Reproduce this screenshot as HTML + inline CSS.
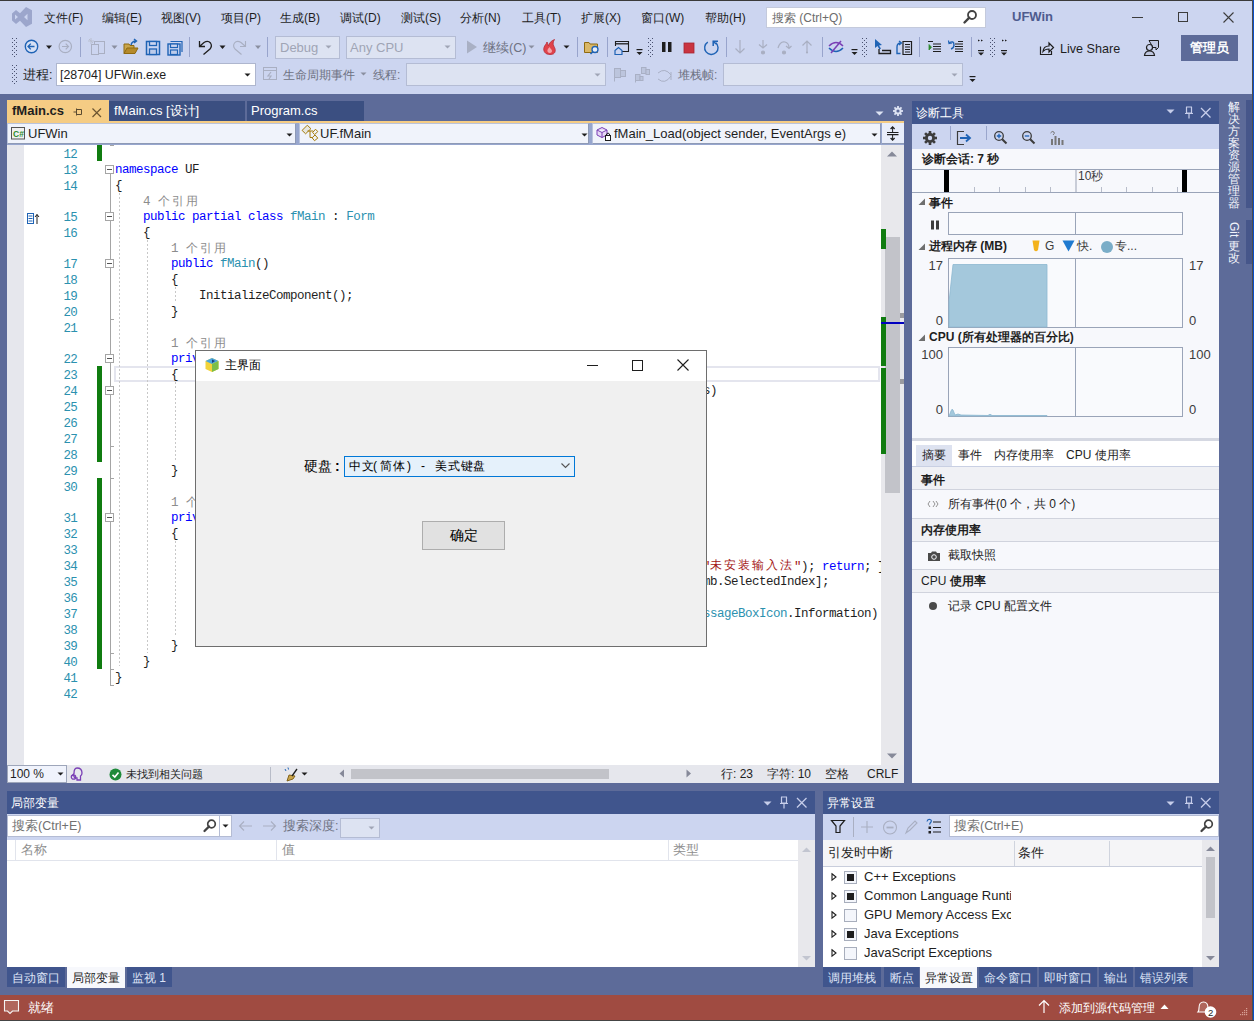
<!DOCTYPE html>
<html><head><meta charset="utf-8">
<style>
*{box-sizing:border-box}
html,body{margin:0;padding:0}
body{width:1254px;height:1021px;position:relative;overflow:hidden;background:#CCD5F0;font-family:"Liberation Sans",sans-serif;font-size:12px;color:#1E1E1E}
.a{position:absolute}
.t{position:absolute;white-space:nowrap;line-height:16px;height:16px}
.code{font-family:"Liberation Mono",monospace;font-size:12.5px;letter-spacing:-0.5px}
.cj{font-family:"Liberation Sans",sans-serif;font-size:13px;letter-spacing:1px}
.t.code{margin-top:1px}
.t.code.ln{margin-top:2px}
.kw{color:#0000FF}.ty{color:#2B91AF}.st{color:#A31515}
.ln{position:absolute;left:40px;width:37px;text-align:right;color:#2B91AF}
.cl{color:#8A8A8A;font-size:12px}
.cjk{font-family:"Liberation Sans",sans-serif;font-size:12px;letter-spacing:2px;position:relative;top:-1px}
svg{position:absolute;overflow:visible}
</style></head><body>
<!-- window borders -->
<div class="a" style="left:0;top:0;width:1254px;height:1px;background:#3A3A3A"></div>
<div class="a" style="left:1252px;top:0;width:1px;height:1021px;background:#4D4D4D"></div><div class="a" style="left:1253px;top:0;width:1px;height:1021px;background:#0B4FC8"></div>
<div class="a" style="left:0;top:1020px;width:1254px;height:1px;background:#444"></div>

<!-- main dark env area -->
<div class="a" style="left:0;top:94px;width:1252px;height:901px;background:#5D6B99"></div>

<!-- status bar -->
<div class="a" style="left:0;top:995px;width:1252px;height:25px;background:#A04B41"></div>

<!-- editor -->
<div class="a" style="left:7px;top:144px;width:897px;height:621px;background:#FFFFFF"></div>
<div class="a" style="left:7px;top:144px;width:17px;height:621px;background:#E6E7ED"></div>

<!-- diag panel -->
<div class="a" style="left:912px;top:101px;width:307px;height:682px;background:#F7F8FC"></div>

<!-- locals panel -->
<div class="a" style="left:7px;top:791px;width:808px;height:176px;background:#FFFFFF"></div>
<!-- exception panel -->
<div class="a" style="left:823px;top:791px;width:396px;height:176px;background:#FFFFFF"></div>


<!-- ===== TITLE / MENU BAR ===== -->
<svg style="left:0;top:0" width="40" height="34"><path d="M12,13.5 L16,10 L20,13.2 L26,7 L32,10.2 L32,23.8 L26,27 L20,20.8 L16,24 L12,20.5 Z M15,14.5 L15,19.5 L18,17 Z M27.5,13.8 L24,17 L27.5,20.2 Z" fill="#9CA6CC" fill-rule="evenodd"/></svg>
<div class="t" style="left:44px;top:10px">文件(F)</div>
<div class="t" style="left:102px;top:10px">编辑(E)</div>
<div class="t" style="left:161px;top:10px">视图(V)</div>
<div class="t" style="left:221px;top:10px">项目(P)</div>
<div class="t" style="left:280px;top:10px">生成(B)</div>
<div class="t" style="left:340px;top:10px">调试(D)</div>
<div class="t" style="left:401px;top:10px">测试(S)</div>
<div class="t" style="left:460px;top:10px">分析(N)</div>
<div class="t" style="left:522px;top:10px">工具(T)</div>
<div class="t" style="left:581px;top:10px">扩展(X)</div>
<div class="t" style="left:641px;top:10px">窗口(W)</div>
<div class="t" style="left:705px;top:10px">帮助(H)</div>
<div class="a" style="left:766px;top:7px;width:220px;height:21px;background:#FFFFFF;border:1px solid #C4CADC"></div>
<div class="t" style="left:772px;top:10px;color:#6D6D6D">搜索 (Ctrl+Q)</div>
<svg style="left:962px;top:9px" width="16" height="16"><circle cx="10" cy="6" r="4" fill="none" stroke="#424242" stroke-width="1.8"/><path d="M7.3,8.7 L2.5,13.5" stroke="#424242" stroke-width="2.4" stroke-linecap="round"/></svg>
<div class="t" style="left:1012px;top:9px;font-weight:bold;font-size:13px;color:#4E5B8E">UFWin</div>
<div class="a" style="left:1132px;top:17px;width:11px;height:1px;background:#3C3C3C"></div>
<div class="a" style="left:1178px;top:12px;width:10px;height:10px;border:1px solid #3C3C3C"></div>
<svg style="left:1223px;top:12px" width="12" height="12"><path d="M0.5,0.5 L10.5,10.5 M10.5,0.5 L0.5,10.5" stroke="#3C3C3C" stroke-width="1.1"/></svg>

<!-- ===== TOOLBAR ROW 1 ===== -->
<svg style="left:11px;top:37px" width="8" height="21"><g fill="#4A5270"><rect x="1" y="1" width="1" height="1"/><rect x="5" y="1" width="1" height="1"/><rect x="3" y="3" width="1" height="1"/><rect x="1" y="5" width="1" height="1"/><rect x="5" y="5" width="1" height="1"/><rect x="3" y="7" width="1" height="1"/><rect x="1" y="9" width="1" height="1"/><rect x="5" y="9" width="1" height="1"/><rect x="3" y="11" width="1" height="1"/><rect x="1" y="13" width="1" height="1"/><rect x="5" y="13" width="1" height="1"/><rect x="3" y="15" width="1" height="1"/><rect x="1" y="17" width="1" height="1"/><rect x="5" y="17" width="1" height="1"/><rect x="3" y="19" width="1" height="1"/></g></svg>
<svg style="left:0;top:34px" width="270" height="28">
 <circle cx="31.5" cy="12.5" r="6.2" fill="#D6E0F5" stroke="#1F63B5" stroke-width="1.4"/>
 <path d="M34.5,12.5 H28 M30.8,9.6 L28,12.5 L30.8,15.4" fill="none" stroke="#1F63B5" stroke-width="1.3"/>
 <path d="M46,11.5 H52 L49,15 Z" fill="#1E1E1E"/>
 <circle cx="65.3" cy="12.5" r="6.2" fill="none" stroke="#A9AFC2" stroke-width="1.2"/>
 <path d="M62,12.5 H68.5 M65.7,9.6 L68.5,12.5 L65.7,15.4" fill="none" stroke="#A9AFC2" stroke-width="1.2"/>
 <rect x="80" y="3" width="1" height="20" fill="#98A4CC"/>
 <rect x="94.5" y="7.5" width="10" height="12" fill="none" stroke="#A9AFC2"/>
 <rect x="91.5" y="10.5" width="7" height="10" fill="#CCD5F0" stroke="#A9AFC2"/>
 <path d="M89,5 L93,9 M91,4 V10 M88,7 H94" stroke="#B9BFD0" stroke-width="1"/>
 <path d="M111.5,11.5 H117.5 L114.5,15 Z" fill="#8A8FA0"/>
 <path d="M124,10 H129 L130,11.5 H134 V19.5 H124 Z" fill="#C9A54C" stroke="#8F6A10" stroke-width="1"/>
 <path d="M124,19.5 L127,14 H138 L135,19.5 Z" fill="#B58A2A" stroke="#8F6A10" stroke-width="1"/>
 <path d="M131,11 Q132,7 136,7 M134,5 L136.5,7 L134,9" fill="none" stroke="#1F63B5" stroke-width="1.4"/>
 <rect x="146.5" y="7.5" width="13" height="13" fill="#C8D4F2" stroke="#1F63B5" stroke-width="1.5"/>
 <rect x="149.5" y="7.5" width="7" height="4" fill="#CCD5F0" stroke="#1F63B5" stroke-width="1.3"/>
 <rect x="149.5" y="15" width="7" height="5.5" fill="#BCCBEA" stroke="#1F63B5" stroke-width="1.3"/>
 <path d="M170.5,7.5 H182 V18" fill="none" stroke="#1F63B5" stroke-width="1.2"/>
 <rect x="168" y="10" width="12" height="11" fill="#C8D4F2" stroke="#1F63B5" stroke-width="1.4"/>
 <rect x="170.5" y="10" width="7" height="3.5" fill="#CCD5F0" stroke="#1F63B5" stroke-width="1.2"/>
 <rect x="170.5" y="16" width="7" height="4.5" fill="#BCCBEA" stroke="#1F63B5" stroke-width="1.2"/>
 <rect x="189" y="3" width="1" height="20" fill="#98A4CC"/>
 <path d="M199.5,7 V12.5 H205 M200,12 L204,8.5 Q208,6 210.5,9 Q212.5,12 210,15 L203.5,20.5" fill="none" stroke="#1E1E1E" stroke-width="1.3"/>
 <path d="M219.5,11.5 H225.5 L222.5,15 Z" fill="#1E1E1E"/>
 <path d="M245.5,7 V12.5 H240 M245,12 L241,8.5 Q237,6 234.5,9 Q232.5,12 235,15 L241.5,20.5" fill="none" stroke="#A9AFC2" stroke-width="1.1"/>
 <path d="M255,11.5 H261 L258,15 Z" fill="#8A8FA0"/>
 <rect x="267" y="3" width="1" height="20" fill="#98A4CC"/>
</svg>
<div class="a" style="left:275px;top:36px;width:65px;height:23px;background:#DDE3F2;border:1px solid #B4BCD4"></div>
<div class="t" style="left:280px;top:40px;color:#A0A5B5;font-size:13px">Debug</div>
<svg style="left:325px;top:45px" width="8" height="5"><path d="M0.5,0.5 H6.5 L3.5,3.5 Z" fill="#A0A5B5"/></svg>
<div class="a" style="left:346px;top:36px;width:110px;height:23px;background:#DDE3F2;border:1px solid #B4BCD4"></div>
<div class="t" style="left:350px;top:40px;color:#A0A5B5;font-size:13px">Any CPU</div>
<svg style="left:444px;top:45px" width="8" height="5"><path d="M0.5,0.5 H6.5 L3.5,3.5 Z" fill="#A0A5B5"/></svg>
<svg style="left:466px;top:40px" width="12" height="14"><path d="M1,0.5 L11,7 L1,13.5 Z" fill="#A9B0C4"/></svg>
<div class="t" style="left:483px;top:40px;color:#6E7282;font-size:12.5px">继续(C)</div>
<svg style="left:528px;top:45px" width="8" height="5"><path d="M0.5,0.5 H6.5 L3.5,3.5 Z" fill="#8A8FA0"/></svg>
<svg style="left:541px;top:38px" width="18" height="18"><path d="M9,16.5 C4,16.5 2,13 3,9.5 C3.8,7 5.5,6 6,4 C7,6 7,7 7.5,8 C8,5 10,3 13.5,1.5 C12,4 11.5,6 13,8.5 C14.5,11 15,14 12.5,15.8 C11.5,16.3 10.5,16.5 9,16.5 Z" fill="#E0434B" stroke="#B52A36" stroke-width="0.8"/><path d="M9,15 C7,15 6,13.5 6.5,12 C7,10.5 8,10 8.5,9 C9.5,11 11,11.5 11,13 C11,14.3 10,15 9,15 Z" fill="#F5A3A8"/></svg>
<svg style="left:563px;top:45px" width="8" height="5"><path d="M0.5,0.5 H6.5 L3.5,3.5 Z" fill="#1E1E1E"/></svg>
<div class="a" style="left:577px;top:37px;width:1px;height:20px;background:#98A4CC"></div>
<svg style="left:583px;top:38px" width="18" height="18"><path d="M1.5,4.5 H6 L7,6 H14.5 V14.5 H1.5 Z" fill="#D9B767" stroke="#8F6A10"/><circle cx="12" cy="11.5" r="3" fill="#E6EEFA" stroke="#1F63B5" stroke-width="1.3"/><path d="M10,13.5 L7.5,16" stroke="#1F63B5" stroke-width="1.6"/></svg>
<div class="a" style="left:607px;top:37px;width:1px;height:20px;background:#98A4CC"></div>
<svg style="left:612px;top:38px" width="20" height="18"><path d="M7,13.5 H16.5 V3.5 H3.5 V8" fill="none" stroke="#1E1E1E" stroke-width="1.1"/><path d="M3.5,5.8 H16.5" stroke="#1E1E1E" stroke-width="1.3"/><path d="M3,12.5 L6.5,9.5 L10,12.5 V16.5 H3 Z" fill="#CCD5F0" stroke="#1F63B5" stroke-width="1.2"/></svg>
<svg style="left:636px;top:49px" width="8" height="8"><rect x="0.5" y="0" width="6" height="1.2" fill="#1E1E1E"/><path d="M0.5,3 H6.5 L3.5,6 Z" fill="#1E1E1E"/></svg>
<svg style="left:648px;top:37px" width="6" height="21"><g fill="#4A5270"><rect x="0" y="1" width="1" height="1"/><rect x="4" y="1" width="1" height="1"/><rect x="2" y="3" width="1" height="1"/><rect x="0" y="5" width="1" height="1"/><rect x="4" y="5" width="1" height="1"/><rect x="2" y="7" width="1" height="1"/><rect x="0" y="9" width="1" height="1"/><rect x="4" y="9" width="1" height="1"/><rect x="2" y="11" width="1" height="1"/><rect x="0" y="13" width="1" height="1"/><rect x="4" y="13" width="1" height="1"/><rect x="2" y="15" width="1" height="1"/><rect x="0" y="17" width="1" height="1"/><rect x="4" y="17" width="1" height="1"/><rect x="2" y="19" width="1" height="1"/></g></svg>
<svg style="left:660px;top:40px" width="14" height="14"><rect x="2" y="2" width="3.5" height="10" fill="#1E1E1E"/><rect x="8" y="2" width="3.5" height="10" fill="#1E1E1E"/></svg>
<svg style="left:682px;top:40px" width="14" height="14"><rect x="2" y="3" width="10" height="10" fill="#C93440" stroke="#A82531" stroke-width="0.8"/></svg>
<svg style="left:702px;top:38px" width="18" height="18"><path d="M5.8,4.1 A6.7,6.7 0 1 0 13.6,4.6" fill="none" stroke="#1F63B5" stroke-width="1.4"/><path d="M16,3.2 H11.2 V8" fill="none" stroke="#1F63B5" stroke-width="1.5"/><path d="M11.2,3.2 L14,6" stroke="#1F63B5" stroke-width="1.3"/></svg>
<div class="a" style="left:726px;top:37px;width:1px;height:20px;background:#98A4CC"></div>
<svg style="left:732px;top:38px" width="90" height="18" fill="none" stroke="#A9AFC2" stroke-width="1.2">
 <path d="M8,2 V15 M3.5,10.5 L8,15 L12.5,10.5"/>
 <path d="M31,2 V10 M27,6.5 L31,10 L35,6.5"/><circle cx="31" cy="14.5" r="1.5" fill="#A9AFC2"/>
 <path d="M46,10 Q48,3 53,4 Q57,5 57,10 M54,8 L57,10.5 L59.5,8"/><circle cx="52" cy="14.5" r="1.5" fill="#A9AFC2"/>
 <path d="M75,15 V3 M70.5,7.5 L75,3 L79.5,7.5"/><circle cx="75" cy="14.5" r="0.5"/>
</svg>
<div class="a" style="left:822px;top:37px;width:1px;height:20px;background:#98A4CC"></div>
<svg style="left:827px;top:38px" width="18" height="18" fill="none" stroke-width="1.5"><path d="M2,8 Q9,1 16,8" stroke="#7A3FB5"/><path d="M2,10 Q9,17 16,10" stroke="#1F63B5"/><path d="M4,15 L14,3" stroke="#7A3FB5"/></svg>
<svg style="left:851px;top:49px" width="8" height="8"><rect x="0.5" y="0" width="6" height="1.2" fill="#1E1E1E"/><path d="M0.5,3 H6.5 L3.5,6 Z" fill="#1E1E1E"/></svg>
<svg style="left:862px;top:37px" width="6" height="21"><g fill="#4A5270"><rect x="0" y="1" width="1" height="1"/><rect x="4" y="1" width="1" height="1"/><rect x="2" y="3" width="1" height="1"/><rect x="0" y="5" width="1" height="1"/><rect x="4" y="5" width="1" height="1"/><rect x="2" y="7" width="1" height="1"/><rect x="0" y="9" width="1" height="1"/><rect x="4" y="9" width="1" height="1"/><rect x="2" y="11" width="1" height="1"/><rect x="0" y="13" width="1" height="1"/><rect x="4" y="13" width="1" height="1"/><rect x="2" y="15" width="1" height="1"/><rect x="0" y="17" width="1" height="1"/><rect x="4" y="17" width="1" height="1"/><rect x="2" y="19" width="1" height="1"/></g></svg>
<svg style="left:873px;top:38px" width="20" height="18"><path d="M2,1 L2,10 L4.5,8 L6.5,11.5 L8,10.5 L6,7.5 L9,7 Z" fill="#1F63B5"/><path d="M6,11 V15.5 H17.5 V12.5 H9" fill="none" stroke="#1E1E1E" stroke-width="1.3"/></svg>
<svg style="left:895px;top:38px" width="20" height="18" fill="none" stroke="#1E1E1E" stroke-width="1.2"><path d="M8,3.5 H16.5 V16.5 H8 Z M10,6.5 H15 M10,9 H15 M10,11.5 H15 M10,14 H15"/><path d="M6,5 Q2,5 2,9 V15.5 H5.5" stroke="#1F63B5" stroke-width="1.4"/><path d="M4,3 L6.5,5 L4,7" stroke="#1F63B5" stroke-width="1.3"/></svg>
<div class="a" style="left:919px;top:37px;width:1px;height:20px;background:#98A4CC"></div>
<svg style="left:926px;top:38px" width="18" height="18" fill="none" stroke-width="1.2"><path d="M2,3.5 H7 M7,6 H15 M7,8.5 H15 M7,11 H15 M7,13.5 H15" stroke="#1E1E1E"/><path d="M3,6.5 V12 L5.5,9.2 Z" fill="#2E8B2E" stroke="#2E8B2E" stroke-width="0.8"/></svg>
<svg style="left:947px;top:38px" width="18" height="18" fill="none" stroke-width="1.2"><path d="M8,6 H16 M8,8.5 H16 M8,11 H16 M8,13.5 H16 M11,3.5 H16" stroke="#1E1E1E"/><path d="M2,5 Q7,2 7,7 Q7,10 4,11" stroke="#1F63B5" stroke-width="1.4"/><path d="M1.5,2.5 L2,5.5 L5,5" stroke="#1F63B5"/></svg>
<div class="a" style="left:971px;top:37px;width:1px;height:20px;background:#98A4CC"></div>
<svg style="left:976px;top:38px" width="40" height="19"><g fill="#1E1E1E"><path d="M2,1.5 L4,2.5 L2,3.5 Z M5,1.5 L7,2.5 L5,3.5 Z"/><rect x="2" y="12" width="6" height="1.2"/><path d="M2,14.5 H8 L5,17.5 Z"/><path d="M26,1.5 L28,2.5 L26,3.5 Z M29,1.5 L31,2.5 L29,3.5 Z"/><rect x="25" y="12" width="6" height="1.2"/><path d="M25,14.5 H31 L28,17.5 Z"/></g><g fill="#4A5270"><rect x="14" y="0" width="1" height="1"/><rect x="18" y="0" width="1" height="1"/><rect x="16" y="2" width="1" height="1"/><rect x="14" y="4" width="1" height="1"/><rect x="18" y="4" width="1" height="1"/><rect x="16" y="6" width="1" height="1"/><rect x="14" y="8" width="1" height="1"/><rect x="18" y="8" width="1" height="1"/><rect x="16" y="10" width="1" height="1"/><rect x="14" y="12" width="1" height="1"/><rect x="18" y="12" width="1" height="1"/><rect x="16" y="14" width="1" height="1"/><rect x="14" y="16" width="1" height="1"/><rect x="18" y="16" width="1" height="1"/><rect x="16" y="18" width="1" height="1"/></g></svg>
<svg style="left:1039px;top:40px" width="16" height="16" fill="none" stroke="#1E1E1E" stroke-width="1.2"><path d="M1.5,6.5 V14.5 H12.5 V11"/><path d="M4,11.5 Q4.5,6 10,6 V3 L14.5,7.5 L10,12 V9 Q6,9 4,11.5 Z"/></svg>
<div class="t" style="left:1060px;top:41px;font-size:12.6px;color:#1E1E1E">Live Share</div>
<svg style="left:1143px;top:39px" width="18" height="18" stroke="#1E1E1E" stroke-width="1.2"><path d="M6,1.5 H15.5 V8.5 L13,11 V8.5 H10 Z" fill="#BFC7E0" stroke-width="1"/><circle cx="6.5" cy="8.5" r="3" fill="#CCD5F0"/><path d="M1.5,16.5 Q2,12 6.5,12 Q11,12 11.5,16.5 Z" fill="#BFC7E0"/></svg>
<div class="a" style="left:1181px;top:35px;width:57px;height:26px;background:#5D6B99"></div>
<div class="t" style="left:1181px;top:40px;width:57px;text-align:center;color:#FFFFFF;font-weight:bold;font-size:12.5px">管理员</div>

<!-- ===== TOOLBAR ROW 2 ===== -->
<svg style="left:11px;top:64px" width="8" height="21"><g fill="#4A5270"><rect x="1" y="1" width="1" height="1"/><rect x="5" y="1" width="1" height="1"/><rect x="3" y="3" width="1" height="1"/><rect x="1" y="5" width="1" height="1"/><rect x="5" y="5" width="1" height="1"/><rect x="3" y="7" width="1" height="1"/><rect x="1" y="9" width="1" height="1"/><rect x="5" y="9" width="1" height="1"/><rect x="3" y="11" width="1" height="1"/><rect x="1" y="13" width="1" height="1"/><rect x="5" y="13" width="1" height="1"/><rect x="3" y="15" width="1" height="1"/><rect x="1" y="17" width="1" height="1"/><rect x="5" y="17" width="1" height="1"/><rect x="3" y="19" width="1" height="1"/></g></svg>
<div class="t" style="left:23px;top:67px;font-size:12.5px">进程:</div>
<div class="a" style="left:56px;top:63px;width:200px;height:23px;background:#FFFFFF;border:1px solid #AEB6CE"></div>
<div class="t" style="left:60px;top:67px;font-size:12.4px">[28704] UFWin.exe</div>
<svg style="left:244px;top:73px" width="8" height="5"><path d="M0.5,0.5 H6.5 L3.5,3.5 Z" fill="#1E1E1E"/></svg>
<svg style="left:262px;top:66px" width="16" height="16" fill="none" stroke="#A9AFC2" stroke-width="1"><rect x="1.5" y="1.5" width="13" height="12"/><path d="M1.5,4.5 H14.5"/><path d="M9,6 L6,10 H9 L7,13" stroke-width="1.2"/></svg>
<div class="t" style="left:283px;top:67px;font-size:12px;color:#6E7282">生命周期事件</div>
<svg style="left:360px;top:72px" width="8" height="5"><path d="M0.5,0.5 H6.5 L3.5,3.5 Z" fill="#8A8FA0"/></svg>
<div class="t" style="left:373px;top:67px;font-size:12px;color:#6E7282">线程:</div>
<div class="a" style="left:406px;top:63px;width:200px;height:23px;background:#DDE3F2;border:1px solid #B4BCD4"></div>
<svg style="left:594px;top:73px" width="8" height="5"><path d="M0.5,0.5 H6.5 L3.5,3.5 Z" fill="#A0A5B5"/></svg>
<svg style="left:612px;top:66px" width="64" height="17" stroke="#A9B0C5" stroke-width="1"><path d="M2.5,2 V15.5" fill="none"/><rect x="2.5" y="2.5" width="6" height="9" fill="#BCC5DD"/><rect x="8.5" y="4.5" width="5" height="6" fill="#BCC5DD"/><path d="M23.5,8 V16.5" fill="none"/><rect x="23.5" y="8.5" width="4.5" height="6" fill="#BCC5DD"/><rect x="28" y="10.5" width="3" height="4" fill="#BCC5DD"/><rect x="29.5" y="1.5" width="4.5" height="6" fill="#BCC5DD"/><rect x="34" y="3.5" width="3.5" height="5" fill="#BCC5DD"/><path d="M46,7 Q53,1 59,9 M46,13 Q53,19 59,10 M59,6 V14" fill="none"/></svg>
<div class="t" style="left:678px;top:67px;font-size:12px;color:#6E7282">堆栈帧:</div>
<div class="a" style="left:723px;top:63px;width:240px;height:23px;background:#DDE3F2;border:1px solid #B4BCD4"></div>
<svg style="left:951px;top:73px" width="8" height="5"><path d="M0.5,0.5 H6.5 L3.5,3.5 Z" fill="#A0A5B5"/></svg>
<svg style="left:969px;top:76px" width="8" height="8"><rect x="0.5" y="0" width="6" height="1.2" fill="#1E1E1E"/><path d="M0.5,3 H6.5 L3.5,6 Z" fill="#1E1E1E"/></svg>

<!-- ===== EDITOR ===== -->
<div class="a" style="left:7px;top:144px;width:874px;height:621px;overflow:hidden">
<div class="a" style="left:107px;top:222px;width:766px;height:16px;border:2px solid #E4E5EE"></div>
<div class="a" style="left:90px;top:1px;width:5px;height:16px;background:#107C10"></div>
<div class="a" style="left:90px;top:222px;width:5px;height:96px;background:#107C10"></div>
<div class="a" style="left:90px;top:334px;width:5px;height:191px;background:#107C10"></div>
<div class="a" style="left:103px;top:26px;width:1px;height:516px;background:#A5A5A5"></div><div class="a" style="left:103px;top:1px;width:4px;height:1px;background:#A5A5A5"></div>
<div class="a" style="left:103px;top:1px;width:4px;height:1px;background:#A5A5A5"></div>
<div class="a" style="left:103px;top:175px;width:4px;height:1px;background:#A5A5A5"></div>
<div class="a" style="left:103px;top:302px;width:4px;height:1px;background:#A5A5A5"></div>
<div class="a" style="left:103px;top:334px;width:4px;height:1px;background:#A5A5A5"></div>
<div class="a" style="left:103px;top:509px;width:4px;height:1px;background:#A5A5A5"></div>
<div class="a" style="left:103px;top:525px;width:4px;height:1px;background:#A5A5A5"></div>
<div class="a" style="left:103px;top:541px;width:4px;height:1px;background:#A5A5A5"></div>
<div class="a" style="left:98px;top:21px;width:9px;height:9px;border:1px solid #A5A5A5;background:#fff"></div><div class="a" style="left:100px;top:25px;width:5px;height:1px;background:#555"></div>
<div class="a" style="left:98px;top:68px;width:9px;height:9px;border:1px solid #A5A5A5;background:#fff"></div><div class="a" style="left:100px;top:72px;width:5px;height:1px;background:#555"></div>
<div class="a" style="left:98px;top:115px;width:9px;height:9px;border:1px solid #A5A5A5;background:#fff"></div><div class="a" style="left:100px;top:119px;width:5px;height:1px;background:#555"></div>
<div class="a" style="left:98px;top:210px;width:9px;height:9px;border:1px solid #A5A5A5;background:#fff"></div><div class="a" style="left:100px;top:214px;width:5px;height:1px;background:#555"></div>
<div class="a" style="left:98px;top:242px;width:9px;height:9px;border:1px solid #A5A5A5;background:#fff"></div><div class="a" style="left:100px;top:246px;width:5px;height:1px;background:#555"></div>
<div class="a" style="left:98px;top:369px;width:9px;height:9px;border:1px solid #A5A5A5;background:#fff"></div><div class="a" style="left:100px;top:373px;width:5px;height:1px;background:#555"></div>
<div class="a" style="left:112px;top:49px;width:1px;height:473px;background:repeating-linear-gradient(to bottom,#C8C8C8 0 2px,transparent 2px 4px)"></div>
<div class="a" style="left:140px;top:96px;width:1px;height:413px;background:repeating-linear-gradient(to bottom,#C8C8C8 0 2px,transparent 2px 4px)"></div>
<div class="a" style="left:168px;top:143px;width:1px;height:16px;background:repeating-linear-gradient(to bottom,#C8C8C8 0 2px,transparent 2px 4px)"></div>
<div class="a" style="left:168px;top:238px;width:1px;height:80px;background:repeating-linear-gradient(to bottom,#C8C8C8 0 2px,transparent 2px 4px)"></div>
<div class="a" style="left:168px;top:397px;width:1px;height:96px;background:repeating-linear-gradient(to bottom,#C8C8C8 0 2px,transparent 2px 4px)"></div>
<div class="a" style="left:196px;top:254px;width:1px;height:48px;background:repeating-linear-gradient(to bottom,#C8C8C8 0 2px,transparent 2px 4px)"></div>
<div class="t code ln" style="left:33px;top:1px;letter-spacing:-0.8px">12</div>
<div class="t code ln" style="left:33px;top:17px;letter-spacing:-0.8px">13</div>
<div class="t code ln" style="left:33px;top:33px;letter-spacing:-0.8px">14</div>
<div class="t code ln" style="left:33px;top:64px;letter-spacing:-0.8px">15</div>
<div class="t code ln" style="left:33px;top:80px;letter-spacing:-0.8px">16</div>
<div class="t code ln" style="left:33px;top:111px;letter-spacing:-0.8px">17</div>
<div class="t code ln" style="left:33px;top:127px;letter-spacing:-0.8px">18</div>
<div class="t code ln" style="left:33px;top:143px;letter-spacing:-0.8px">19</div>
<div class="t code ln" style="left:33px;top:159px;letter-spacing:-0.8px">20</div>
<div class="t code ln" style="left:33px;top:175px;letter-spacing:-0.8px">21</div>
<div class="t code ln" style="left:33px;top:206px;letter-spacing:-0.8px">22</div>
<div class="t code ln" style="left:33px;top:222px;letter-spacing:-0.8px">23</div>
<div class="t code ln" style="left:33px;top:238px;letter-spacing:-0.8px">24</div>
<div class="t code ln" style="left:33px;top:254px;letter-spacing:-0.8px">25</div>
<div class="t code ln" style="left:33px;top:270px;letter-spacing:-0.8px">26</div>
<div class="t code ln" style="left:33px;top:286px;letter-spacing:-0.8px">27</div>
<div class="t code ln" style="left:33px;top:302px;letter-spacing:-0.8px">28</div>
<div class="t code ln" style="left:33px;top:318px;letter-spacing:-0.8px">29</div>
<div class="t code ln" style="left:33px;top:334px;letter-spacing:-0.8px">30</div>
<div class="t code ln" style="left:33px;top:365px;letter-spacing:-0.8px">31</div>
<div class="t code ln" style="left:33px;top:381px;letter-spacing:-0.8px">32</div>
<div class="t code ln" style="left:33px;top:397px;letter-spacing:-0.8px">33</div>
<div class="t code ln" style="left:33px;top:413px;letter-spacing:-0.8px">34</div>
<div class="t code ln" style="left:33px;top:429px;letter-spacing:-0.8px">35</div>
<div class="t code ln" style="left:33px;top:445px;letter-spacing:-0.8px">36</div>
<div class="t code ln" style="left:33px;top:461px;letter-spacing:-0.8px">37</div>
<div class="t code ln" style="left:33px;top:477px;letter-spacing:-0.8px">38</div>
<div class="t code ln" style="left:33px;top:493px;letter-spacing:-0.8px">39</div>
<div class="t code ln" style="left:33px;top:509px;letter-spacing:-0.8px">40</div>
<div class="t code ln" style="left:33px;top:525px;letter-spacing:-0.8px">41</div>
<div class="t code ln" style="left:33px;top:541px;letter-spacing:-0.8px">42</div>
<div class="t cl" style="left:136px;top:49px;height:15px;line-height:15px"><span class="code" style="font-size:12.5px;letter-spacing:-0.5px;color:#8C8C8C;position:relative;top:1px">4</span><span style="margin-left:8px;letter-spacing:2px;color:#8C8C8C;position:relative;top:1px">个引用</span></div>
<div class="t cl" style="left:164px;top:96px;height:15px;line-height:15px"><span class="code" style="font-size:12.5px;letter-spacing:-0.5px;color:#8C8C8C;position:relative;top:1px">1</span><span style="margin-left:8px;letter-spacing:2px;color:#8C8C8C;position:relative;top:1px">个引用</span></div>
<div class="t cl" style="left:164px;top:191px;height:15px;line-height:15px"><span class="code" style="font-size:12.5px;letter-spacing:-0.5px;color:#8C8C8C;position:relative;top:1px">1</span><span style="margin-left:8px;letter-spacing:2px;color:#8C8C8C;position:relative;top:1px">个引用</span></div>
<div class="t cl" style="left:164px;top:350px;height:15px;line-height:15px"><span class="code" style="font-size:12.5px;letter-spacing:-0.5px;color:#8C8C8C;position:relative;top:1px">1</span><span style="margin-left:8px;letter-spacing:2px;color:#8C8C8C;position:relative;top:1px">个引用</span></div>
<div class="t code" style="left:108px;top:17px"><span class="kw">namespace</span> UF</div>
<div class="t code" style="left:108px;top:33px">{</div>
<div class="t code" style="left:136px;top:64px"><span class="kw">public</span> <span class="kw">partial</span> <span class="kw">class</span> <span class="ty">fMain</span> : <span class="ty">Form</span></div>
<div class="t code" style="left:136px;top:80px">{</div>
<div class="t code" style="left:164px;top:111px"><span class="kw">public</span> <span class="ty">fMain</span>()</div>
<div class="t code" style="left:164px;top:127px">{</div>
<div class="t code" style="left:192px;top:143px">InitializeComponent();</div>
<div class="t code" style="left:164px;top:159px">}</div>
<div class="t code" style="left:164px;top:206px"><span class="kw">private</span> <span class="kw">void</span> fMain_Load(<span class="kw">object</span> sender, <span class="ty">EventArgs</span> e)</div>
<div class="t code" style="left:164px;top:222px">{</div>
<div class="t code" style="left:696px;top:238px">s)</div>
<div class="t code" style="left:164px;top:318px">}</div>
<div class="t code" style="left:164px;top:365px"><span class="kw">private</span> <span class="kw">void</span> btnOK_Click(<span class="kw">object</span> sender, <span class="ty">EventArgs</span> e)</div>
<div class="t code" style="left:164px;top:381px">{</div>
<div class="t code" style="left:696px;top:413px"><span class="st">"<span class="cjk">未安装输入法</span>"</span>); <span class="kw">return</span>; }</div>
<div class="t code" style="left:696px;top:429px">mb.SelectedIndex];</div>
<div class="t code" style="left:696px;top:461px"><span class="ty">ssageBoxIcon</span>.Information)</div>
<div class="t code" style="left:164px;top:493px">}</div>
<div class="t code" style="left:136px;top:509px">}</div>
<div class="t code" style="left:108px;top:525px">}</div>
<svg style="left:20px;top:69px" width="14" height="12"><rect x="0.5" y="0.5" width="6" height="10" fill="#fff" stroke="#1F63B5"/><path d="M1.5,3 H5.5 M1.5,5.5 H5.5 M1.5,8 H5.5" stroke="#1F63B5"/><path d="M10,11 V1.5 M8,4 L10,1.5 L12,4" fill="none" stroke="#1E1E1E" stroke-width="1"/></svg>
</div>
<div class="a" style="left:881px;top:144px;width:23px;height:621px;background:#E8E8EC"></div>
<svg style="left:886px;top:150px" width="12" height="8"><path d="M1,6.5 L6,1.5 L11,6.5 Z" fill="#868999"/></svg>
<svg style="left:886px;top:752px" width="12" height="8"><path d="M1,1.5 L6,6.5 L11,1.5 Z" fill="#868999"/></svg>
<div class="a" style="left:885px;top:237px;width:15px;height:256px;background:#C2C3C9"></div>
<div class="a" style="left:881px;top:229px;width:5px;height:20px;background:#107C10"></div>
<div class="a" style="left:881px;top:317px;width:5px;height:49px;background:#107C10"></div>
<div class="a" style="left:881px;top:368px;width:5px;height:86px;background:#107C10"></div>
<div class="a" style="left:881px;top:322px;width:23px;height:2px;background:#0000C0"></div>
<div class="a" style="left:900px;top:313px;width:4px;height:5px;background:#9A9AA0"></div>
<div class="a" style="left:900px;top:379px;width:4px;height:5px;background:#9A9AA0"></div>

<div class="a" style="left:7px;top:765px;width:897px;height:18px;background:#E6E7ED"></div>
<div class="a" style="left:7px;top:765px;width:60px;height:18px;background:#F0F3FC;border:1px solid #9EA6BA"></div>
<div class="t" style="left:10px;top:766px;font-size:12px">100 %</div>
<svg style="left:57px;top:772px" width="8" height="5"><path d="M0.5,0.5 H6.5 L3.5,3.5 Z" fill="#1E1E1E"/></svg>
<svg style="left:69px;top:766px" width="16" height="16"><path d="M8,2 Q13,2 13,7 Q13,9 11.5,10 V14 H8 V12 Q5,12 5,10 L3.5,9.5 L5,7.5 Q5,2 8,2 Z" fill="none" stroke="#7A3FB5" stroke-width="1.3"/><circle cx="4.5" cy="11" r="2.2" fill="none" stroke="#7A3FB5" stroke-width="1.3"/></svg>
<svg style="left:109px;top:768px" width="13" height="13"><circle cx="6.5" cy="6.5" r="6" fill="#1E8A3A"/><path d="M3.5,6.8 L5.8,9 L9.5,4.5" fill="none" stroke="#fff" stroke-width="1.6"/></svg>
<div class="t" style="left:126px;top:766px;font-size:11px">未找到相关问题</div>
<div class="a" style="left:270px;top:767px;width:1px;height:15px;background:#B8BCC8"></div>
<svg style="left:283px;top:766px" width="16" height="16"><path d="M6,9 L4,15 L10,13 L12,10 Z" fill="#C9A54C" stroke="#7A5A10" stroke-width="0.9"/><path d="M9,10 L14,3" stroke="#1E1E1E" stroke-width="1.3"/><path d="M2,3 L3,5 M5,1.5 L5.5,3.5" stroke="#1F63B5" stroke-width="1"/></svg>
<svg style="left:301px;top:772px" width="8" height="5"><path d="M0.5,0.5 H6.5 L3.5,3.5 Z" fill="#1E1E1E"/></svg>
<svg style="left:339px;top:769px" width="6" height="10"><path d="M5,0.5 L0.5,4.5 L5,8.5 Z" fill="#868999"/></svg>
<div class="a" style="left:351px;top:769px;width:258px;height:10px;background:#C2C3C9"></div>
<svg style="left:686px;top:769px" width="6" height="10"><path d="M0.5,0.5 L5,4.5 L0.5,8.5 Z" fill="#868999"/></svg>
<div class="t" style="left:721px;top:766px;font-size:12px">行: 23</div>
<div class="t" style="left:767px;top:766px;font-size:12px">字符: 10</div>
<div class="t" style="left:825px;top:766px;font-size:12px">空格</div>
<div class="t" style="left:867px;top:766px;font-size:12px">CRLF</div>

<!-- ===== DOC TABS ===== -->
<div class="a" style="left:7px;top:100px;width:102px;height:23px;background:#F5CC84"></div>
<div class="t" style="left:12px;top:103px;font-weight:bold;font-size:13px;color:#1E1E1E">fMain.cs</div>
<svg style="left:73px;top:108px" width="10" height="9"><path d="M0.5,4 H3.5 M3.5,0.5 V7.5 M3.5,1.5 H8.5 V6.5 H3.5" fill="none" stroke="#5A4A30" stroke-width="1"/></svg>
<svg style="left:92px;top:108px" width="10" height="10"><path d="M0.5,0.5 L9,9 M9,0.5 L0.5,9" stroke="#6B5431" stroke-width="1.2"/></svg>
<div class="a" style="left:109px;top:101px;width:136px;height:20px;background:#3B4F81"></div>
<div class="t" style="left:114px;top:103px;font-size:13px;color:#FFFFFF">fMain.cs [设计]</div>
<div class="a" style="left:247px;top:101px;width:117px;height:20px;background:#3B4F81"></div>
<div class="t" style="left:251px;top:103px;font-size:13px;color:#FFFFFF">Program.cs</div>
<div class="a" style="left:7px;top:121px;width:897px;height:2px;background:#F5CC84"></div>
<svg style="left:875px;top:111px" width="10" height="6"><path d="M0.5,0.5 H8.5 L4.5,4.5 Z" fill="#DDE3F3"/></svg>
<svg style="left:891px;top:104px" width="14" height="14"><g fill="#DDE3F3"><circle cx="7" cy="7" r="3.6"/><rect x="6.1" y="2" width="1.8" height="10"/><rect x="2" y="6.1" width="10" height="1.8"/><rect x="6.1" y="2" width="1.8" height="10" transform="rotate(45 7 7)"/><rect x="6.1" y="2" width="1.8" height="10" transform="rotate(-45 7 7)"/></g><circle cx="7" cy="7" r="1.6" fill="#5D6B99"/></svg>
<!-- nav bar -->
<div class="a" style="left:7px;top:123px;width:897px;height:22px;background:#97A6CE"></div>
<div class="a" style="left:7px;top:123px;width:289px;height:21px;background:#F0F3FB;border-top:1px solid #B9C3DC;border-left:1px solid #B9C3DC;border-right:1px solid #8E9AB6;border-bottom:1px solid #8E9AB6"></div>
<svg style="left:11px;top:127px" width="15" height="13"><rect x="0.5" y="0.5" width="13" height="11.5" fill="#F0F0F0" stroke="#555"/><text x="2" y="9.5" font-size="8.5" font-weight="bold" fill="#2E8B2E" font-family="Liberation Sans">C#</text></svg>
<div class="t" style="left:28px;top:126px;font-size:13px">UFWin</div>
<svg style="left:286px;top:133px" width="8" height="5"><path d="M0.5,0.5 H6.5 L3.5,3.5 Z" fill="#1E1E1E"/></svg>
<div class="a" style="left:299px;top:123px;width:290px;height:21px;background:#F0F3FB;border-top:1px solid #B9C3DC;border-left:1px solid #B9C3DC;border-right:1px solid #8E9AB6;border-bottom:1px solid #8E9AB6"></div>
<svg style="left:300px;top:123px" width="20" height="20"><g fill="none" stroke="#A57B0A" stroke-width="1"><path d="M2.1,7.4 L7.3,2.2 L10.9,5.7 L5.6,10.8 Z" fill="#E6E6E0"/><path d="M12.6,9.6 L15.5,6.2 L17.8,8.6 L14.7,11.5 Z"/><path d="M12.1,14.8 L15,12 L17.8,15.1 L14.5,17.7 Z"/><path d="M7.5,8 H13 M10,8 V14.5 H12.5"/></g></svg>
<div class="t" style="left:320px;top:126px;font-size:13px">UF.fMain</div>
<svg style="left:581px;top:133px" width="8" height="5"><path d="M0.5,0.5 H6.5 L3.5,3.5 Z" fill="#1E1E1E"/></svg>
<div class="a" style="left:592px;top:123px;width:289px;height:21px;background:#F0F3FB;border-top:1px solid #B9C3DC;border-left:1px solid #B9C3DC;border-right:1px solid #8E9AB6;border-bottom:1px solid #8E9AB6"></div>
<svg style="left:595px;top:125px" width="18" height="17"><path d="M2,5 L7,2.5 L12,5 V10 L7,12.5 L2,10 Z M2,5 L7,7.5 L12,5 M7,7.5 V12.5" fill="#E6D8F5" stroke="#7A3FB5" stroke-width="1"/><rect x="10.5" y="10.5" width="5" height="5" fill="#fff" stroke="#1E1E1E" stroke-width="1"/><path d="M11.5,10.5 V9 Q13,7 14.5,9 V10.5" fill="none" stroke="#1E1E1E" stroke-width="1"/></svg>
<div class="t" style="left:614px;top:126px;font-size:13px">fMain_Load(object sender, EventArgs e)</div>
<svg style="left:871px;top:133px" width="8" height="5"><path d="M0.5,0.5 H6.5 L3.5,3.5 Z" fill="#1E1E1E"/></svg>
<div class="a" style="left:882px;top:123px;width:22px;height:21px;background:#E8EDFA;border-bottom:1px solid #8E9AB6"></div>
<svg style="left:885px;top:125px" width="16" height="17" fill="none" stroke="#1E1E1E"><path d="M2,7.5 H13.5 M2,9.6 H13.5" stroke-width="1.1"/><path d="M7.6,2 V7.5 M7.6,9.6 V15" stroke-width="1"/><path d="M5.6,4 L7.6,2 L9.6,4 M5.6,13 L7.6,15 L9.6,13" stroke-width="1.3"/></svg>

<!-- ===== DIALOG ===== -->
<div class="a" style="left:195px;top:350px;width:512px;height:297px;background:#F0F0F0;border:1px solid #6E6E6E"></div>
<div class="a" style="left:196px;top:351px;width:510px;height:30px;background:#FFFFFF"></div>
<svg style="left:204px;top:357px" width="16" height="16"><path d="M8,1 L14.5,4 V12 L8,15 L1.5,12 V4 Z" fill="#F2D33A"/><path d="M8,1 L14.5,4 L8,7 L1.5,4 Z" fill="#49A6E0"/><path d="M8,7 L14.5,4 V12 L8,15 Z" fill="#7BBE4A"/><path d="M8,2.5 L11,4 L8,6 Z" fill="#1A3E7A"/></svg>
<div class="t" style="left:225px;top:357px;font-size:12px;color:#000">主界面</div>
<div class="a" style="left:587px;top:365px;width:11px;height:1px;background:#1E1E1E"></div>
<div class="a" style="left:632px;top:360px;width:11px;height:11px;border:1px solid #1E1E1E"></div>
<svg style="left:677px;top:359px" width="13" height="13"><path d="M0.5,0.5 L11.5,11.5 M11.5,0.5 L0.5,11.5" stroke="#1E1E1E" stroke-width="1.1"/></svg>
<div class="t" style="left:304px;top:458px;font-size:14px;color:#000">硬盘</div><div class="t" style="left:335px;top:458px;font-size:14px;color:#000;font-weight:bold">:</div>
<div class="a" style="left:344px;top:456px;width:231px;height:21px;background:#E5F1FB;border:1px solid #0078D7"></div>
<div class="t" style="left:349px;top:458px;font-size:12px;color:#000;letter-spacing:1px">中文</div><div class="t" style="left:373px;top:458px;font-size:12px;color:#000">(</div><div class="t" style="left:380px;top:458px;font-size:12px;color:#000;letter-spacing:1px">简体</div><div class="t" style="left:407px;top:458px;font-size:12px;color:#000">)</div><div class="t" style="left:421px;top:458px;font-size:12px;color:#000">-</div><div class="t" style="left:435px;top:458px;font-size:12px;color:#000;letter-spacing:0.8px">美式键盘</div>
<svg style="left:561px;top:463px" width="10" height="7"><path d="M0.5,0.5 L4.5,4.5 L8.5,0.5" fill="none" stroke="#555" stroke-width="1.1"/></svg>
<div class="a" style="left:422px;top:521px;width:83px;height:29px;background:#E1E1E1;border:1px solid #ADADAD"></div>
<div class="t" style="left:422px;top:527px;width:83px;text-align:center;font-size:14px;color:#000">确定</div>


<!-- ===== DIAG PANEL ===== -->
<div class="a" style="left:912px;top:101px;width:307px;height:23px;background:#40558D"></div>
<div class="t" style="left:916px;top:105px;font-size:12px;color:#FFFFFF">诊断工具</div>
<svg style="left:1166px;top:109px" width="10" height="6"><path d="M0.5,0.5 H8.5 L4.5,4.5 Z" fill="#C6CDEA"/></svg>
<svg style="left:1183px;top:106px" width="12" height="13" fill="none" stroke="#C6CDEA" stroke-width="1.2"><path d="M3.5,1 V7 H8.5 V1 M2,7.5 H10 M6,7.5 V12.5 M3,1 H9"/></svg>
<svg style="left:1200px;top:107px" width="12" height="12"><path d="M1,1 L10.5,10.5 M10.5,1 L1,10.5" stroke="#C6CDEA" stroke-width="1.3"/></svg>
<div class="a" style="left:912px;top:124px;width:307px;height:25px;background:#CCD5F0"></div>
<svg style="left:922px;top:130px" width="16" height="16"><g fill="#3C3C3C"><circle cx="8" cy="8" r="5"/><rect x="6.7" y="1" width="2.6" height="14"/><rect x="1" y="6.7" width="14" height="2.6"/><rect x="6.7" y="1" width="2.6" height="14" transform="rotate(45 8 8)"/><rect x="6.7" y="1" width="2.6" height="14" transform="rotate(-45 8 8)"/></g><circle cx="8" cy="8" r="2.2" fill="#CCD5F0"/></svg>
<div class="a" style="left:950px;top:126px;width:1px;height:14px;background:#9AA6CC"></div>
<svg style="left:955px;top:129px" width="20" height="18"><path d="M9,2.5 H2.5 V15.5 H9" fill="none" stroke="#3C3C3C" stroke-width="1.2"/><path d="M5,9 H14 M11,5.5 L15,9 L11,12.5" fill="none" stroke="#1F63B5" stroke-width="1.8"/></svg>
<div class="a" style="left:986px;top:126px;width:1px;height:14px;background:#9AA6CC"></div>
<svg style="left:993px;top:130px" width="16" height="16" fill="none" stroke="#3C3C3C"><circle cx="6" cy="6" r="4.3" stroke-width="1.3"/><path d="M9.2,9.2 L13.5,13.5" stroke-width="2"/><path d="M3.8,6 H8.2 M6,3.8 V8.2" stroke="#1F63B5" stroke-width="1.3"/></svg>
<svg style="left:1021px;top:130px" width="16" height="16" fill="none" stroke="#3C3C3C"><circle cx="6" cy="6" r="4.3" stroke-width="1.3"/><path d="M9.2,9.2 L13.5,13.5" stroke-width="2"/><path d="M3.8,6 H8.2" stroke="#1F63B5" stroke-width="1.3"/></svg>
<svg style="left:1049px;top:130px" width="16" height="17"><g fill="#777"><rect x="2" y="9" width="2" height="6"/><rect x="5.5" y="6" width="2" height="9"/><rect x="9" y="8" width="2" height="7"/><rect x="12.5" y="10" width="2" height="5"/></g><path d="M1.5,3 Q3,0.5 5,2 Q6,3.5 4,5" fill="none" stroke="#777" stroke-width="1"/></svg>
<div class="t" style="left:922px;top:151px;font-size:12px;font-weight:bold;color:#1E1E1E">诊断会话: 7 秒</div>
<!-- ruler -->
<div class="a" style="left:912px;top:169px;width:307px;height:24px;border-top:1px solid #9AA4B8;border-bottom:1px solid #9AA4B8"></div>
<div class="a" style="left:1075px;top:170px;width:2px;height:22px;background:#C9CDD8"></div>
<div class="a" style="left:944px;top:170px;width:5px;height:22px;background:#000"></div>
<div class="a" style="left:1182px;top:170px;width:5px;height:22px;background:#000"></div>
<div class="a" style="left:974px;top:187px;width:1px;height:5px;background:#B8BDCA"></div>
<div class="a" style="left:999px;top:187px;width:1px;height:5px;background:#B8BDCA"></div>
<div class="a" style="left:1025px;top:187px;width:1px;height:5px;background:#B8BDCA"></div>
<div class="a" style="left:1050px;top:187px;width:1px;height:5px;background:#B8BDCA"></div>
<div class="a" style="left:1101px;top:187px;width:1px;height:5px;background:#B8BDCA"></div>
<div class="a" style="left:1126px;top:187px;width:1px;height:5px;background:#B8BDCA"></div>
<div class="a" style="left:1152px;top:187px;width:1px;height:5px;background:#B8BDCA"></div>
<div class="a" style="left:1177px;top:187px;width:1px;height:5px;background:#B8BDCA"></div>
<div class="t" style="left:1078px;top:168px;font-size:12px;color:#3C3C3C">10秒</div>
<!-- events -->
<svg style="left:918px;top:198px" width="8" height="8"><path d="M7,0.5 V7 H0.5 Z" fill="#6E6E6E"/></svg>
<div class="t" style="left:929px;top:195px;font-size:12px;font-weight:bold">事件</div>
<svg style="left:930px;top:220px" width="10" height="10"><rect x="1" y="0.5" width="3" height="9" fill="#3C3C3C"/><rect x="6" y="0.5" width="3" height="9" fill="#3C3C3C"/></svg>
<div class="a" style="left:948px;top:212px;width:235px;height:23px;border:1px solid #9AA4B8;background:#F9FAFD"></div>
<div class="a" style="left:1075px;top:212px;width:1px;height:23px;background:#9AA4B8"></div>
<!-- memory -->
<svg style="left:918px;top:243px" width="8" height="8"><path d="M7,0.5 V7 H0.5 Z" fill="#6E6E6E"/></svg>
<div class="t" style="left:929px;top:238px;font-size:12px;font-weight:bold">进程内存 (MB)</div>
<svg style="left:1031px;top:240px" width="10" height="13"><path d="M1.5,0.5 H8.5 L7,10 Q5,12.5 3,10 Z" fill="#F3B21C"/></svg>
<div class="t" style="left:1045px;top:238px;font-size:12px;color:#3C3C3C">G</div>
<svg style="left:1062px;top:240px" width="14" height="13"><path d="M0.5,0.5 H12.5 L6.5,11.5 Z" fill="#1F7AD0"/></svg>
<div class="t" style="left:1077px;top:238px;font-size:12px;color:#3C3C3C">快.</div>
<svg style="left:1100px;top:240px" width="14" height="14"><circle cx="7" cy="7" r="6" fill="#7AADC8"/></svg>
<div class="t" style="left:1115px;top:238px;font-size:12px;color:#3C3C3C">专...</div>
<div class="t" style="left:912px;top:258px;width:31px;text-align:right;font-size:13px;color:#3C3C3C">17</div>
<div class="t" style="left:912px;top:313px;width:31px;text-align:right;font-size:13px;color:#3C3C3C">0</div>
<div class="t" style="left:1189px;top:258px;font-size:13px;color:#3C3C3C">17</div>
<div class="t" style="left:1189px;top:313px;font-size:13px;color:#3C3C3C">0</div>
<div class="a" style="left:948px;top:258px;width:235px;height:70px;border:1px solid #9AA4B8;background:#F9FAFD"></div>
<div class="a" style="left:1075px;top:258px;width:1px;height:70px;background:#9AA4B8"></div>
<svg style="left:948px;top:258px" width="100" height="70"><path d="M1,69 V44 L5,6.5 H99 V69 Z" fill="#A4C8DC" stroke="#8DB8D0" stroke-width="0.8"/></svg>
<!-- cpu -->
<svg style="left:918px;top:334px" width="8" height="8"><path d="M7,0.5 V7 H0.5 Z" fill="#6E6E6E"/></svg>
<div class="t" style="left:929px;top:329px;font-size:12px;font-weight:bold">CPU (所有处理器的百分比)</div>
<div class="t" style="left:912px;top:347px;width:31px;text-align:right;font-size:13px;color:#3C3C3C">100</div>
<div class="t" style="left:912px;top:402px;width:31px;text-align:right;font-size:13px;color:#3C3C3C">0</div>
<div class="t" style="left:1189px;top:347px;font-size:13px;color:#3C3C3C">100</div>
<div class="t" style="left:1189px;top:402px;font-size:13px;color:#3C3C3C">0</div>
<div class="a" style="left:948px;top:347px;width:235px;height:70px;border:1px solid #9AA4B8;background:#F9FAFD"></div>
<div class="a" style="left:1075px;top:347px;width:1px;height:70px;background:#9AA4B8"></div>
<svg style="left:948px;top:347px" width="100" height="70"><path d="M1,69 L3,64 Q4,61 5,63 L7,68 Q10,66 13,68 L40,68.5 Q42,66 44,68.5 L99,68.5 V69 Z" fill="#A4C8DC" stroke="#8DB8D0" stroke-width="0.8"/></svg>
<!-- separator -->
<div class="a" style="left:912px;top:438px;width:307px;height:3px;background:#D5D8E2"></div>
<div class="a" style="left:912px;top:441px;width:307px;height:26px;background:#FFFFFF"></div>
<div class="a" style="left:916px;top:445px;width:36px;height:21px;background:#DDE2F0"></div>
<div class="t" style="left:922px;top:447px;font-size:12px">摘要</div>
<div class="t" style="left:958px;top:447px;font-size:12px">事件</div>
<div class="t" style="left:994px;top:447px;font-size:12px">内存使用率</div>
<div class="t" style="left:1066px;top:447px;font-size:12px">CPU 使用率</div>
<div class="a" style="left:912px;top:466px;width:307px;height:1px;background:#C9D0E3"></div>
<div class="a" style="left:912px;top:467px;width:307px;height:23px;background:#F0F1F5;border-bottom:1px solid #D0D3DD"></div>
<div class="t" style="left:921px;top:472px;font-size:12px;font-weight:bold">事件</div>
<svg style="left:927px;top:499px" width="14" height="10" fill="none" stroke="#888" stroke-width="0.9"><path d="M3,2 L1,5 L3,8 M6,2 L8,5 L6,8 M9,2 L11,5 L9,8 M4.5,5 H4.6"/></svg>
<div class="t" style="left:948px;top:496px;font-size:12px">所有事件(0 个，共 0 个)</div>
<div class="a" style="left:912px;top:518px;width:307px;height:24px;background:#F0F1F5;border-top:1px solid #D0D3DD;border-bottom:1px solid #D0D3DD"></div>
<div class="t" style="left:921px;top:522px;font-size:12px;font-weight:bold">内存使用率</div>
<svg style="left:927px;top:550px" width="14" height="12"><path d="M1,3 H4 L5,1.5 H9 L10,3 H13 V11 H1 Z" fill="#4A4A4A"/><circle cx="7" cy="7" r="2.3" fill="none" stroke="#F7F8FC" stroke-width="1"/></svg>
<div class="t" style="left:948px;top:547px;font-size:12px">截取快照</div>
<div class="a" style="left:912px;top:569px;width:307px;height:24px;background:#F0F1F5;border-top:1px solid #D0D3DD;border-bottom:1px solid #D0D3DD"></div>
<div class="t" style="left:921px;top:573px;font-size:12px">CPU <b>使用率</b></div>
<svg style="left:928px;top:601px" width="10" height="10"><circle cx="5" cy="5" r="4" fill="#4A4A4A"/></svg>
<div class="t" style="left:948px;top:598px;font-size:12px">记录 CPU 配置文件</div>
<!-- right vertical tabs -->
<div class="a" style="left:1246px;top:100px;width:6px;height:108px;background:#46568A"></div>
<div class="a" style="left:1246px;top:220px;width:6px;height:44px;background:#46568A"></div>
<div class="t" style="left:1228px;top:101px;width:12px;height:12px;line-height:12px;font-size:12px;color:#F2F4FB">解</div><div class="t" style="left:1228px;top:113px;width:12px;height:12px;line-height:12px;font-size:12px;color:#F2F4FB">决</div><div class="t" style="left:1228px;top:125px;width:12px;height:12px;line-height:12px;font-size:12px;color:#F2F4FB">方</div><div class="t" style="left:1228px;top:137px;width:12px;height:12px;line-height:12px;font-size:12px;color:#F2F4FB">案</div><div class="t" style="left:1228px;top:149px;width:12px;height:12px;line-height:12px;font-size:12px;color:#F2F4FB">资</div><div class="t" style="left:1228px;top:161px;width:12px;height:12px;line-height:12px;font-size:12px;color:#F2F4FB">源</div><div class="t" style="left:1228px;top:173px;width:12px;height:12px;line-height:12px;font-size:12px;color:#F2F4FB">管</div><div class="t" style="left:1228px;top:185px;width:12px;height:12px;line-height:12px;font-size:12px;color:#F2F4FB">理</div><div class="t" style="left:1228px;top:197px;width:12px;height:12px;line-height:12px;font-size:12px;color:#F2F4FB">器</div><div class="t" style="left:1225px;top:225px;width:18px;height:12px;line-height:12px;font-size:12px;color:#F2F4FB;transform:rotate(90deg);transform-origin:9px 6px">Git</div><div class="t" style="left:1228px;top:240px;width:12px;height:12px;line-height:12px;font-size:12px;color:#F2F4FB">更</div><div class="t" style="left:1228px;top:252px;width:12px;height:12px;line-height:12px;font-size:12px;color:#F2F4FB">改</div>


<!-- ===== LOCALS PANEL ===== -->
<div class="a" style="left:7px;top:791px;width:808px;height:23px;background:#40558D"></div>
<div class="t" style="left:11px;top:795px;font-size:12px;color:#FFFFFF">局部变量</div>
<svg style="left:763px;top:801px" width="10" height="6"><path d="M0.5,0.5 H8.5 L4.5,4.5 Z" fill="#C6CDEA"/></svg>
<svg style="left:778px;top:796px" width="12" height="13" fill="none" stroke="#C6CDEA" stroke-width="1.2"><path d="M3.5,1 V7 H8.5 V1 M2,7.5 H10 M6,7.5 V12.5 M3,1 H9"/></svg>
<svg style="left:796px;top:797px" width="12" height="12"><path d="M1,1 L10.5,10.5 M10.5,1 L1,10.5" stroke="#C6CDEA" stroke-width="1.3"/></svg>
<div class="a" style="left:7px;top:814px;width:808px;height:26px;background:#CCD5F0"></div>
<div class="a" style="left:7px;top:815px;width:225px;height:22px;background:#FFFFFF;border:1px solid #B4BCD4"></div>
<div class="a" style="left:219px;top:815px;width:13px;height:22px;border-left:1px solid #B4BCD4"></div>
<div class="t" style="left:12px;top:818px;font-size:12.5px;color:#717171">搜索(Ctrl+E)</div>
<svg style="left:202px;top:818px" width="16" height="16"><circle cx="9.5" cy="6" r="3.8" fill="none" stroke="#424242" stroke-width="1.7"/><path d="M7,8.5 L2.5,13" stroke="#424242" stroke-width="2.3" stroke-linecap="round"/></svg>
<svg style="left:222px;top:824px" width="8" height="5"><path d="M0.5,0.5 H6.5 L3.5,3.5 Z" fill="#1E1E1E"/></svg>
<svg style="left:238px;top:820px" width="40" height="12" fill="none" stroke="#A9AFC2" stroke-width="1.1"><path d="M1.5,6 H14 M6,1.5 L1.5,6 L6,10.5"/><path d="M25,6 H37.5 M33,1.5 L37.5,6 L33,10.5"/></svg>
<div class="t" style="left:283px;top:818px;font-size:12.5px;color:#6E7282">搜索深度:</div>
<div class="a" style="left:340px;top:818px;width:40px;height:20px;background:#DDE3F2;border:1px solid #B4BCD4"></div>
<svg style="left:368px;top:826px" width="8" height="5"><path d="M0.5,0.5 H6.5 L3.5,3.5 Z" fill="#A0A5B5"/></svg>
<div class="a" style="left:7px;top:840px;width:791px;height:21px;background:#FFFFFF;border-bottom:1px solid #E1E4EC"></div>
<div class="a" style="left:15px;top:840px;width:1px;height:21px;background:#E1E4EC"></div>
<div class="a" style="left:276px;top:840px;width:1px;height:21px;background:#E1E4EC"></div>
<div class="a" style="left:668px;top:840px;width:1px;height:21px;background:#E1E4EC"></div>
<div class="t" style="left:21px;top:842px;font-size:12.5px;color:#8E8E8E">名称</div>
<div class="t" style="left:282px;top:842px;font-size:12.5px;color:#8E8E8E">值</div>
<div class="t" style="left:673px;top:842px;font-size:12.5px;color:#8E8E8E">类型</div>
<div class="a" style="left:798px;top:840px;width:17px;height:127px;background:#E8E8EC"></div>
<svg style="left:801px;top:846px" width="12" height="7"><path d="M1,6 L5.5,1.5 L10,6 Z" fill="#C2C5D0"/></svg>
<svg style="left:801px;top:955px" width="12" height="7"><path d="M1,1 L5.5,5.5 L10,1 Z" fill="#C2C5D0"/></svg>
<div class="a" style="left:7px;top:967px;width:58px;height:20px;background:#40558D"></div>
<div class="t" style="left:12px;top:970px;font-size:12px;color:#DCE2F5">自动窗口</div>
<div class="a" style="left:67px;top:967px;width:58px;height:21px;background:#F7F8FC"></div>
<div class="t" style="left:72px;top:970px;font-size:12px;color:#1E1E1E">局部变量</div>
<div class="a" style="left:127px;top:967px;width:45px;height:20px;background:#40558D"></div>
<div class="t" style="left:132px;top:970px;font-size:12px;color:#DCE2F5">监视 1</div>

<!-- ===== EXCEPTION PANEL ===== -->
<div class="a" style="left:823px;top:791px;width:396px;height:23px;background:#40558D"></div>
<div class="t" style="left:827px;top:795px;font-size:12px;color:#FFFFFF">异常设置</div>
<svg style="left:1166px;top:801px" width="10" height="6"><path d="M0.5,0.5 H8.5 L4.5,4.5 Z" fill="#C6CDEA"/></svg>
<svg style="left:1183px;top:796px" width="12" height="13" fill="none" stroke="#C6CDEA" stroke-width="1.2"><path d="M3.5,1 V7 H8.5 V1 M2,7.5 H10 M6,7.5 V12.5 M3,1 H9"/></svg>
<svg style="left:1200px;top:797px" width="12" height="12"><path d="M1,1 L10.5,10.5 M10.5,1 L1,10.5" stroke="#C6CDEA" stroke-width="1.3"/></svg>
<div class="a" style="left:823px;top:814px;width:396px;height:26px;background:#CCD5F0"></div>
<svg style="left:830px;top:819px" width="16" height="16"><path d="M1.5,1.5 H14.5 L10,7 V13.5 H6 V7 Z" fill="#CCD5F0" stroke="#1E1E1E" stroke-width="1.2"/></svg>
<div class="a" style="left:853px;top:817px;width:1px;height:20px;background:#A9AFC2"></div>
<svg style="left:859px;top:819px" width="90" height="16" fill="none" stroke="#A9AFC2" stroke-width="1.1"><path d="M8,2 V14 M2,8 H14"/><circle cx="31" cy="8.5" r="6.5"/><path d="M27.5,8.5 H34.5" stroke-width="1.8"/><path d="M47,14 L49,9 L56,2 L58,4 L51,11 Z"/></svg>
<svg style="left:925px;top:818px" width="18" height="18"><path d="M2,3.5 Q2.5,1 5,1.5 Q7,2 6,4 Q5,5 4.5,6.5" fill="none" stroke="#1F63B5" stroke-width="1.2"/><rect x="3.5" y="8.5" width="2.5" height="2.5" fill="#1E1E1E"/><rect x="3.5" y="13" width="2.5" height="2.5" fill="#1E1E1E"/><path d="M8,4 H16 M8,9.5 H16 M8,14 H16" stroke="#1E1E1E" stroke-width="1.2"/></svg>
<div class="a" style="left:949px;top:815px;width:270px;height:22px;background:#FFFFFF;border:1px solid #B4BCD4"></div>
<div class="t" style="left:954px;top:818px;font-size:12.5px;color:#717171">搜索(Ctrl+E)</div>
<svg style="left:1199px;top:818px" width="16" height="16"><circle cx="9.5" cy="6" r="3.8" fill="none" stroke="#424242" stroke-width="1.7"/><path d="M7,8.5 L2.5,13" stroke="#424242" stroke-width="2.3" stroke-linecap="round"/></svg>
<div class="a" style="left:823px;top:840px;width:379px;height:27px;background:#F5F5F7;border-bottom:1px solid #C9CEDC"></div>
<div class="a" style="left:1014px;top:841px;width:1px;height:25px;background:#D0D4DE"></div>
<div class="a" style="left:1109px;top:841px;width:1px;height:25px;background:#D0D4DE"></div>
<div class="t" style="left:828px;top:845px;font-size:12.5px;color:#1E1E1E">引发时中断</div>
<div class="t" style="left:1018px;top:845px;font-size:12.5px;color:#1E1E1E">条件</div>
<svg style="left:831px;top:873px" width="7" height="9"><path d="M1,0.8 L5,4 L1,7.2 Z" fill="none" stroke="#1E1E1E" stroke-width="1.1"/></svg><div class="a" style="left:844px;top:871px;width:13px;height:13px;border:1px solid #A8AEBC;background:#F4F6FB"></div><div class="a" style="left:847px;top:874px;width:7px;height:7px;background:#1E1E1E"></div><div class="t" style="left:864px;top:869px;font-size:13px;color:#1E1E1E;width:147px;overflow:hidden">C++ Exceptions</div><svg style="left:831px;top:892px" width="7" height="9"><path d="M1,0.8 L5,4 L1,7.2 Z" fill="none" stroke="#1E1E1E" stroke-width="1.1"/></svg><div class="a" style="left:844px;top:890px;width:13px;height:13px;border:1px solid #A8AEBC;background:#F4F6FB"></div><div class="a" style="left:847px;top:893px;width:7px;height:7px;background:#1E1E1E"></div><div class="t" style="left:864px;top:888px;font-size:13px;color:#1E1E1E;width:147px;overflow:hidden">Common Language Runti</div><svg style="left:831px;top:911px" width="7" height="9"><path d="M1,0.8 L5,4 L1,7.2 Z" fill="none" stroke="#1E1E1E" stroke-width="1.1"/></svg><div class="a" style="left:844px;top:909px;width:13px;height:13px;border:1px solid #A8AEBC;background:#F4F6FB"></div><div class="t" style="left:864px;top:907px;font-size:13px;color:#1E1E1E;width:147px;overflow:hidden">GPU Memory Access Exc</div><svg style="left:831px;top:930px" width="7" height="9"><path d="M1,0.8 L5,4 L1,7.2 Z" fill="none" stroke="#1E1E1E" stroke-width="1.1"/></svg><div class="a" style="left:844px;top:928px;width:13px;height:13px;border:1px solid #A8AEBC;background:#F4F6FB"></div><div class="a" style="left:847px;top:931px;width:7px;height:7px;background:#1E1E1E"></div><div class="t" style="left:864px;top:926px;font-size:13px;color:#1E1E1E;width:147px;overflow:hidden">Java Exceptions</div><svg style="left:831px;top:949px" width="7" height="9"><path d="M1,0.8 L5,4 L1,7.2 Z" fill="none" stroke="#1E1E1E" stroke-width="1.1"/></svg><div class="a" style="left:844px;top:947px;width:13px;height:13px;border:1px solid #A8AEBC;background:#F4F6FB"></div><div class="t" style="left:864px;top:945px;font-size:13px;color:#1E1E1E;width:147px;overflow:hidden">JavaScript Exceptions</div>
<div class="a" style="left:1202px;top:840px;width:17px;height:127px;background:#E8E8EC"></div>
<svg style="left:1205px;top:845px" width="12" height="7"><path d="M1,6 L5.5,1.5 L10,6 Z" fill="#868999"/></svg>
<svg style="left:1205px;top:955px" width="12" height="7"><path d="M1,1 L5.5,5.5 L10,1 Z" fill="#868999"/></svg>
<div class="a" style="left:1206px;top:857px;width:9px;height:61px;background:#C2C3C9"></div>
<div class="a" style="left:823px;top:967px;width:58px;height:20px;background:#40558D"></div><div class="t" style="left:823px;top:970px;width:58px;text-align:center;font-size:12px;color:#DCE2F5">调用堆栈</div><div class="a" style="left:884px;top:967px;width:35px;height:20px;background:#40558D"></div><div class="t" style="left:884px;top:970px;width:35px;text-align:center;font-size:12px;color:#DCE2F5">断点</div><div class="a" style="left:920px;top:967px;width:57px;height:21px;background:#F7F8FC"></div><div class="t" style="left:920px;top:970px;width:57px;text-align:center;font-size:12px;color:#1E1E1E">异常设置</div><div class="a" style="left:979px;top:967px;width:58px;height:20px;background:#40558D"></div><div class="t" style="left:979px;top:970px;width:58px;text-align:center;font-size:12px;color:#DCE2F5">命令窗口</div><div class="a" style="left:1039px;top:967px;width:58px;height:20px;background:#40558D"></div><div class="t" style="left:1039px;top:970px;width:58px;text-align:center;font-size:12px;color:#DCE2F5">即时窗口</div><div class="a" style="left:1099px;top:967px;width:34px;height:20px;background:#40558D"></div><div class="t" style="left:1099px;top:970px;width:34px;text-align:center;font-size:12px;color:#DCE2F5">输出</div><div class="a" style="left:1135px;top:967px;width:58px;height:20px;background:#40558D"></div><div class="t" style="left:1135px;top:970px;width:58px;text-align:center;font-size:12px;color:#DCE2F5">错误列表</div>
<!-- ===== STATUS BAR ===== -->
<svg style="left:3px;top:999px" width="18" height="18"><path d="M1.5,1.5 H15.5 V12 H9.5 L7,14.5 L4.5,12 H1.5 Z" fill="#B0665C" stroke="#F5F5F5" stroke-width="1.1"/></svg>
<div class="t" style="left:28px;top:1000px;font-size:12.5px;color:#FFFFFF">就绪</div>
<svg style="left:1037px;top:999px" width="14" height="16"><path d="M7,1.5 V14 M2,6.5 L7,1.5 L12,6.5" fill="none" stroke="#FFFFFF" stroke-width="1.2"/></svg>
<div class="t" style="left:1059px;top:1000px;font-size:12px;color:#FFFFFF">添加到源代码管理</div>
<svg style="left:1160px;top:1004px" width="10" height="6"><path d="M0.5,5 L4.5,0.5 L8.5,5 Z" fill="#FFFFFF"/></svg>
<svg style="left:1195px;top:999px" width="24" height="20"><path d="M3,13 Q4,12 4,9 Q4,3 8.5,3 Q13,3 13,9 Q13,12 14,13 Z" fill="#B0665C" stroke="#FFFFFF" stroke-width="1.1"/><circle cx="15.5" cy="13" r="5.8" fill="#FFFFFF"/><text x="13" y="16.5" font-size="9.5" font-family="Liberation Sans" fill="#1E1E1E">2</text></svg>
<svg style="left:1239px;top:1007px" width="10" height="10"><g fill="#D8A095"><rect x="7" y="1" width="1.2" height="1.2"/><rect x="5" y="3" width="1.2" height="1.2"/><rect x="7" y="3" width="1.2" height="1.2"/><rect x="3" y="5" width="1.2" height="1.2"/><rect x="5" y="5" width="1.2" height="1.2"/><rect x="7" y="5" width="1.2" height="1.2"/><rect x="1" y="7" width="1.2" height="1.2"/><rect x="3" y="7" width="1.2" height="1.2"/><rect x="5" y="7" width="1.2" height="1.2"/><rect x="7" y="7" width="1.2" height="1.2"/></g></svg>

</body></html>
